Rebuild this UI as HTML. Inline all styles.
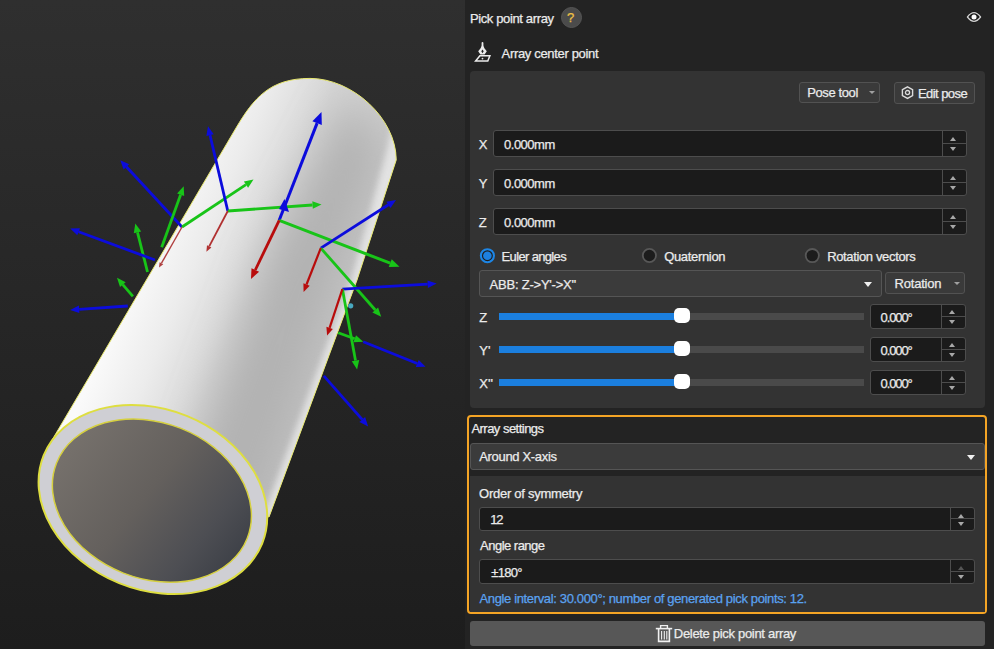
<!DOCTYPE html>
<html><head><meta charset="utf-8">
<style>
*{margin:0;padding:0;box-sizing:border-box}
html,body{width:994px;height:649px;overflow:hidden;background:#232323;font-family:"Liberation Sans",sans-serif;color:#ebebeb;font-size:13px}
.a{position:absolute}
#view{left:0;top:0;width:465px;height:649px}
.t{position:absolute;white-space:nowrap;line-height:1;-webkit-text-stroke:0.25px currentColor}
.card{background:#333333;border-radius:4px}
.inp{position:absolute;background:#1b1b1b;border:1px solid #4d4d4d;border-radius:3px}
.spin{position:absolute;right:0;top:0;bottom:0;width:24px;border-left:1px solid #4d4d4d}
.spin .mid{position:absolute;left:0;right:0;top:calc(50% - 1px);height:1px;background:#4d4d4d}
.up,.dn{position:absolute;left:7.2px;width:0;height:0;border-left:3.5px solid transparent;border-right:3.5px solid transparent}
.up{border-bottom:4px solid #a8a8a8}
.dn{border-top:4px solid #a8a8a8}
.btn{position:absolute;background:#3a3a3a;border:1px solid #525252;border-radius:3px}
.radio{position:absolute;width:15px;height:15px;border-radius:50%}
.track{position:absolute;height:7px;background:#4a4a4a}
.fill{position:absolute;height:7px;background:#1b7fdf}
.knob{position:absolute;width:16px;height:15px;border-radius:5px;background:#fff}
</style></head>
<body>
<svg id="view" class="a" width="465" height="649" viewBox="0 0 465 649">
  <defs>
    <linearGradient id="bg" x1="0" y1="0" x2="0" y2="1">
      <stop offset="0" stop-color="#2f2f2f"/>
      <stop offset="1" stop-color="#1d1d1d"/>
    </linearGradient>
    <linearGradient id="body" gradientUnits="userSpaceOnUse" x1="140" y1="260" x2="330" y2="340">
      <stop offset="0" stop-color="#fafafa"/>
      <stop offset="0.25" stop-color="#ececec"/>
      <stop offset="0.55" stop-color="#d4d4d4"/>
      <stop offset="1" stop-color="#c6c6c6"/>
    </linearGradient>
    <linearGradient id="hole" gradientUnits="userSpaceOnUse" x1="60" y1="470" x2="250" y2="530">
      <stop offset="0" stop-color="#75706b"/>
      <stop offset="0.45" stop-color="#64605d"/>
      <stop offset="0.8" stop-color="#4d4e53"/>
      <stop offset="1" stop-color="#3e4148"/>
    </linearGradient>
    <clipPath id="bc"><path d="M51.5,441 L236,128 C253.9,97.9 270,78.4 310,78.4 C352,78.4 396.2,118 396.2,160 L357,280 L269,517 Z"/></clipPath>
    <filter id="bl" x="-50%" y="-50%" width="200%" height="200%"><feGaussianBlur stdDeviation="20"/></filter>
    <filter id="bl2" x="-50%" y="-50%" width="200%" height="200%"><feGaussianBlur stdDeviation="3"/></filter>
  </defs>
  <rect width="465" height="649" fill="url(#bg)"/>
  <path d="M51.5,441 L236,128 C253.9,97.9 270,78.4 310,78.4 C352,78.4 396.2,118 396.2,160 L357,280 L269,517 Z" fill="url(#body)"/>
  <g clip-path="url(#bc)">
    <path d="M350,95 L385,150 L345,270 L265,520 L170,520 L270,250 Z" fill="#b2b2b2" filter="url(#bl)"/>
    <path d="M394,118 L402,160 L362,280 L274,517 L263,517 L352,278 L387,150 Z" fill="#e8e8e8" opacity="0.85" filter="url(#bl2)"/>
  </g>
  <path d="M51.5,441 L236,128 C253.9,97.9 270,78.4 310,78.4 C352,78.4 396.2,118 396.2,160 L357,280 L269,517 Z" fill="none" stroke="#e8e870" stroke-width="1"/>
  <ellipse cx="152.9" cy="499.5" rx="117.8" ry="90.2" transform="rotate(22 152.9 499.5)" fill="#cfcfd4" stroke="#dede40" stroke-width="2"/>
  <ellipse cx="151.9" cy="500.6" rx="102.5" ry="77.9" transform="rotate(21.5 151.9 500.6)" fill="url(#hole)" stroke="#d6d040" stroke-width="1.5"/>
  <g stroke-linecap="butt">
<line x1="182.0" y1="227.0" x2="126.4" y2="166.8" stroke="#0c0cdc" stroke-width="2.8"/>
<path d="M120.3,160.2 L129.2,164.2 L123.6,169.4 Z" fill="#0c0cdc"/>
<line x1="182.0" y1="227.0" x2="246.0" y2="184.6" stroke="#18c418" stroke-width="2.8"/>
<path d="M253.5,179.6 L248.1,187.7 L243.9,181.4 Z" fill="#18c418"/>
<line x1="182.0" y1="227.0" x2="161.5" y2="263.2" stroke="#b04040" stroke-width="1.4"/>
<path d="M159.0,267.6 L159.6,262.2 L163.3,264.3 Z" fill="#b04040"/>
<line x1="227.8" y1="211.0" x2="210.0" y2="135.1" stroke="#0c0cdc" stroke-width="2.8"/>
<path d="M208.0,126.3 L213.7,134.2 L206.4,135.9 Z" fill="#0c0cdc"/>
<line x1="227.8" y1="211.0" x2="312.5" y2="205.0" stroke="#18c418" stroke-width="2.8"/>
<path d="M321.5,204.4 L312.8,208.8 L312.3,201.3 Z" fill="#18c418"/>
<line x1="227.8" y1="211.0" x2="209.2" y2="246.4" stroke="#b03030" stroke-width="1.8"/>
<path d="M206.4,251.7 L207.0,245.2 L211.4,247.6 Z" fill="#b03030"/>
<line x1="279.2" y1="220.3" x2="317.1" y2="123.1" stroke="#0c0cdc" stroke-width="3"/>
<path d="M321.5,111.9 L321.8,124.9 L312.4,121.2 Z" fill="#0c0cdc"/>
<line x1="279.2" y1="220.3" x2="390.2" y2="263.2" stroke="#18c418" stroke-width="3"/>
<path d="M399.5,266.8 L388.7,267.1 L391.7,259.3 Z" fill="#18c418"/>
<line x1="279.2" y1="220.3" x2="255.3" y2="270.0" stroke="#b80c0c" stroke-width="2.8"/>
<path d="M251.0,279.0 L251.5,268.2 L259.1,271.8 Z" fill="#b80c0c"/>
<line x1="320.8" y1="248.1" x2="388.4" y2="204.8" stroke="#0c0cdc" stroke-width="2.8"/>
<path d="M396.0,200.0 L390.5,208.0 L386.4,201.7 Z" fill="#0c0cdc"/>
<line x1="320.8" y1="248.1" x2="375.3" y2="310.0" stroke="#18c418" stroke-width="2.8"/>
<path d="M381.2,316.8 L372.4,312.5 L378.1,307.5 Z" fill="#18c418"/>
<line x1="320.8" y1="248.1" x2="306.5" y2="284.5" stroke="#b80c0c" stroke-width="2.2"/>
<path d="M303.6,291.9 L303.4,283.2 L309.7,285.7 Z" fill="#b80c0c"/>
<line x1="342.4" y1="289.1" x2="427.7" y2="284.1" stroke="#0c0cdc" stroke-width="2.8"/>
<path d="M436.7,283.6 L427.9,287.9 L427.5,280.4 Z" fill="#0c0cdc"/>
<line x1="342.4" y1="289.1" x2="355.5" y2="360.6" stroke="#18c418" stroke-width="2.8"/>
<path d="M357.1,369.5 L351.8,361.3 L359.2,360.0 Z" fill="#18c418"/>
<line x1="342.4" y1="289.1" x2="329.6" y2="327.8" stroke="#b80c0c" stroke-width="2.2"/>
<path d="M327.1,335.4 L326.4,326.7 L332.8,328.9 Z" fill="#b80c0c"/>
<line x1="161.7" y1="247.3" x2="180.6" y2="194.8" stroke="#18c418" stroke-width="2.8"/>
<path d="M183.7,186.3 L184.2,196.0 L177.1,193.5 Z" fill="#18c418"/>
<line x1="147.5" y1="272.0" x2="137.5" y2="232.3" stroke="#18c418" stroke-width="2.8"/>
<path d="M135.3,223.6 L141.2,231.4 L133.8,233.3 Z" fill="#18c418"/>
<line x1="132.9" y1="296.4" x2="122.8" y2="284.6" stroke="#18c418" stroke-width="2.8"/>
<path d="M117.0,277.8 L125.7,282.2 L120.0,287.1 Z" fill="#18c418"/>
<line x1="155.0" y1="260.0" x2="78.6" y2="231.7" stroke="#0c0cdc" stroke-width="2.8"/>
<path d="M70.2,228.6 L80.0,228.2 L77.3,235.3 Z" fill="#0c0cdc"/>
<line x1="127.8" y1="306.0" x2="79.2" y2="309.4" stroke="#0c0cdc" stroke-width="2.8"/>
<path d="M70.2,310.0 L78.9,305.6 L79.4,313.1 Z" fill="#0c0cdc"/>
<line x1="338.2" y1="332.7" x2="354.7" y2="338.7" stroke="#18c418" stroke-width="2.8"/>
<path d="M363.2,341.8 L353.4,342.3 L356.0,335.2 Z" fill="#18c418"/>
<line x1="363.2" y1="341.8" x2="417.2" y2="363.5" stroke="#0c0cdc" stroke-width="2.8"/>
<path d="M425.6,366.8 L415.8,367.0 L418.7,359.9 Z" fill="#0c0cdc"/>
<line x1="323.8" y1="375.9" x2="362.3" y2="419.6" stroke="#0c0cdc" stroke-width="2.8"/>
<path d="M368.2,426.4 L359.4,422.1 L365.1,417.1 Z" fill="#0c0cdc"/>
<path d="M284.5,199 L289,212 L279,209 Z" fill="#0c0cdc"/>
<circle cx="350.7" cy="305.8" r="2.6" fill="#48a8c0"/>
  </g>
</svg>
<div class="a" style="left:465px;top:0;width:529px;height:649px;background:#232323"></div>
<div class="t" id="t1" style="left:469.90px;top:11.90px;letter-spacing:-0.366px;">Pick point array</div>
<div class="a" style="left:561px;top:7px;width:21px;height:21px;border-radius:50%;background:#4b4b4b;border:1px solid #555"></div>
<div class="t" id="q" style="left:567.00px;top:11.00px;letter-spacing:0.000px;color:#f0c244;font-size:13px">?</div>
<svg class="a" style="left:966px;top:11px;overflow:visible" width="16" height="12" viewBox="0 0 16 12">
  <path d="M1.4,6 Q8,-2.6 14.6,6 Q8,14.6 1.4,6 Z" fill="none" stroke="#151515" stroke-width="2.6"/><path d="M1.4,6 Q8,-2.6 14.6,6 Q8,14.6 1.4,6 Z" fill="none" stroke="#d0d0d0" stroke-width="1.3"/>
  <circle cx="8" cy="6" r="2.5" fill="#fff"/>
</svg>
<svg class="a" style="left:470px;top:38px" width="26" height="28" viewBox="0 0 26 28">
  <rect x="11.6" y="4" width="1.8" height="4.2" rx="0.9" fill="#ececec"/>
  <path d="M11.7,7.6 L13.3,7.6 L14.4,10.2 L16.8,13.2 L14.6,16.6 L10.4,16.6 L8.2,13.2 L10.6,10.2 Z M12.5,11.4 L11.3,13.3 L12.5,15.3 L13.7,13.3 Z" fill="#ececec" fill-rule="evenodd"/>
  <path d="M9.9,17.8 L19.9,17.8 L17.8,23.1 L5.6,23.1 Z" fill="none" stroke="#ececec" stroke-width="1.5"/>
  <circle cx="12.5" cy="20.6" r="0.9" fill="#ececec"/>
</svg>
<div class="t" id="t2" style="left:501.60px;top:47.10px;letter-spacing:-0.330px;">Array center point</div>
<div class="a card" style="left:470px;top:71px;width:515px;height:337px"></div>
<div class="btn" style="left:799px;top:82px;width:81px;height:21px"></div>
<div class="a" style="left:869px;top:91px;width:0;height:0;border-left:3px solid transparent;border-right:3px solid transparent;border-top:3px solid #a0a0a0"></div>
<div class="btn" style="left:894px;top:82px;width:81px;height:22px"></div>
<svg class="a" style="left:901px;top:86px" width="13" height="14" viewBox="0 0 13 14">
  <path d="M6.5,0.8 L11.6,3.7 L11.6,9.5 L6.5,12.4 L1.4,9.5 L1.4,3.7 Z" fill="none" stroke="#dcdcdc" stroke-width="1.4"/>
  <circle cx="6.5" cy="6.6" r="2.1" fill="none" stroke="#dcdcdc" stroke-width="1.3"/>
</svg>
<div class="t" id="t3" style="left:807.20px;top:85.71px;letter-spacing:-0.386px;">Pose tool</div>
<div class="t" id="t4" style="left:917.90px;top:86.71px;letter-spacing:-0.550px;">Edit pose</div>
<div class="t" id="l0" style="left:478.70px;top:137.90px;letter-spacing:-1.100px;">X</div>
<div class="inp" style="left:493px;top:130px;width:474px;height:27px"><div class="spin"><div class="mid"></div><div class="up" style="top:6px"></div><div class="dn" style="top:16px"></div></div></div>
<div class="t" id="v0" style="left:504.00px;top:137.90px;letter-spacing:-0.483px;">0.000mm</div>
<div class="t" id="l1" style="left:478.70px;top:176.90px;letter-spacing:-1.100px;">Y</div>
<div class="inp" style="left:493px;top:169px;width:474px;height:27px"><div class="spin"><div class="mid"></div><div class="up" style="top:6px"></div><div class="dn" style="top:16px"></div></div></div>
<div class="t" id="v1" style="left:504.00px;top:176.90px;letter-spacing:-0.483px;">0.000mm</div>
<div class="t" id="l2" style="left:478.70px;top:215.90px;letter-spacing:-1.100px;">Z</div>
<div class="inp" style="left:493px;top:208px;width:474px;height:27px"><div class="spin"><div class="mid"></div><div class="up" style="top:6px"></div><div class="dn" style="top:16px"></div></div></div>
<div class="t" id="v2" style="left:504.00px;top:215.90px;letter-spacing:-0.483px;">0.000mm</div>
<svg class="a" style="left:479px;top:247px" width="17" height="17" viewBox="0 0 17 17"><circle cx="8.4" cy="8.7" r="6.5" fill="#1e1e1e" stroke="#1d86e6" stroke-width="2.1"/><circle cx="8.4" cy="8.7" r="4.3" fill="#1d80e0"/></svg>
<svg class="a" style="left:641px;top:247px" width="17" height="17" viewBox="0 0 17 17"><circle cx="8.4" cy="8.5" r="6.6" fill="#1c1c1c" stroke="#585858" stroke-width="1.8"/></svg>
<svg class="a" style="left:804px;top:247px" width="17" height="17" viewBox="0 0 17 17"><circle cx="8.3" cy="8.6" r="6.6" fill="#1c1c1c" stroke="#585858" stroke-width="1.8"/></svg>
<div class="btn" style="left:479px;top:270px;width:403px;height:27px;background:#3b3b3b;border-color:#555"></div>
<div class="a" style="left:864px;top:282px;width:0;height:0;border-left:4.5px solid transparent;border-right:4.5px solid transparent;border-top:5px solid #f0f0f0"></div>
<div class="btn" style="left:885px;top:272px;width:80px;height:22px"></div>
<div class="a" style="left:954px;top:282px;width:0;height:0;border-left:3px solid transparent;border-right:3px solid transparent;border-top:3px solid #a0a0a0"></div>
<div class="t" id="t7" style="left:501.60px;top:250.21px;letter-spacing:-0.654px;">Euler angles</div>
<div class="t" id="t8" style="left:664.20px;top:250.21px;letter-spacing:-0.333px;">Quaternion</div>
<div class="t" id="t9" style="left:827.20px;top:250.21px;letter-spacing:-0.360px;">Rotation vectors</div>
<div class="t" id="t10" style="left:489.60px;top:278.00px;letter-spacing:-0.222px;">ABB: Z-&gt;Y'-&gt;X''</div>
<div class="t" id="t11" style="left:894.60px;top:276.80px;letter-spacing:-0.229px;">Rotation</div>
<div class="t" id="sl0" style="left:479.30px;top:311.00px;letter-spacing:0.000px;">Z</div>
<div class="track" style="left:499px;top:313px;width:365px"></div>
<div class="fill" style="left:499px;top:313px;width:179px"></div>
<div class="knob" style="left:674px;top:308px"></div>
<div class="inp" style="left:870px;top:304px;width:96px;height:25px"><div class="spin"><div class="mid"></div><div class="up" style="top:5px"></div><div class="dn" style="top:14.5px"></div></div></div>
<div class="t" id="sv0" style="left:880.60px;top:311.00px;letter-spacing:-1.120px;">0.000°</div>
<div class="t" id="sl1" style="left:479.30px;top:344.00px;letter-spacing:0.000px;">Y'</div>
<div class="track" style="left:499px;top:346px;width:365px"></div>
<div class="fill" style="left:499px;top:346px;width:179px"></div>
<div class="knob" style="left:674px;top:341px"></div>
<div class="inp" style="left:870px;top:337px;width:96px;height:25px"><div class="spin"><div class="mid"></div><div class="up" style="top:5px"></div><div class="dn" style="top:14.5px"></div></div></div>
<div class="t" id="sv1" style="left:880.60px;top:344.00px;letter-spacing:-1.120px;">0.000°</div>
<div class="t" id="sl2" style="left:479.30px;top:377.00px;letter-spacing:0.000px;">X''</div>
<div class="track" style="left:499px;top:379px;width:365px"></div>
<div class="fill" style="left:499px;top:379px;width:179px"></div>
<div class="knob" style="left:674px;top:374px"></div>
<div class="inp" style="left:870px;top:370px;width:96px;height:25px"><div class="spin"><div class="mid"></div><div class="up" style="top:5px"></div><div class="dn" style="top:14.5px"></div></div></div>
<div class="t" id="sv2" style="left:880.60px;top:377.00px;letter-spacing:-1.120px;">0.000°</div>
<div class="a" style="left:467px;top:415px;width:520px;height:199px;border:2px solid #f4a425;border-radius:4px;background:#232323"></div>
<div class="btn" style="left:470px;top:443px;width:515px;height:27px;background:#3b3b3b;border-color:#555"></div>
<div class="a" style="left:967px;top:455px;width:0;height:0;border-left:4.5px solid transparent;border-right:4.5px solid transparent;border-top:5px solid #f0f0f0"></div>
<div class="a" style="left:470px;top:476px;width:515px;height:136px;background:#333"></div>
<div class="inp" style="left:479px;top:507px;width:496px;height:24px"><div class="spin"><div class="mid"></div><div class="up" style="top:6px"></div><div class="dn" style="top:14px"></div></div></div>
<div class="inp" style="left:479px;top:559px;width:496px;height:25px"><div class="spin"><div class="mid"></div><div class="up" style="top:6px;border-bottom-color:#555"></div><div class="dn" style="top:15px"></div></div></div>
<div class="a" style="left:470px;top:621px;width:515px;height:25px;background:#575757;border-radius:3px"></div>
<svg class="a" style="left:655px;top:624px" width="18" height="19" viewBox="0 0 18 19">
  <g fill="none" stroke="#f0f0f0">
    <path d="M5.6,4.2 L5.6,1.6 L12.4,1.6 L12.4,4.2" stroke-width="1.4"/>
    <line x1="0.8" y1="4.6" x2="17.2" y2="4.6" stroke-width="1.6"/>
    <path d="M3.6,5 L3.6,17.4 L14.4,17.4 L14.4,5" stroke-width="1.6"/>
    <line x1="6.6" y1="7" x2="6.6" y2="15.6" stroke-width="1.1"/>
    <line x1="9.3" y1="7" x2="9.3" y2="15.6" stroke-width="1.1"/>
    <line x1="11.8" y1="7" x2="11.8" y2="15.6" stroke-width="1.1"/>
  </g>
</svg>
<div class="t" id="t13" style="left:471.40px;top:422.40px;letter-spacing:-0.523px;">Array settings</div>
<div class="t" id="t14" style="left:479.20px;top:449.71px;letter-spacing:-0.317px;">Around X-axis</div>
<div class="t" id="t15" style="left:479.10px;top:486.80px;letter-spacing:-0.269px;">Order of symmetry</div>
<div class="t" id="t16" style="left:490.30px;top:513.40px;letter-spacing:-1.300px;">12</div>
<div class="t" id="t17" style="left:480.10px;top:538.80px;letter-spacing:-0.520px;">Angle range</div>
<div class="t" id="t18" style="left:491.30px;top:566.00px;letter-spacing:-0.700px;">±180°</div>
<div class="t" id="t19" style="left:479.50px;top:591.60px;letter-spacing:-0.358px;color:#5aa2f0">Angle interval: 30.000°; number of generated pick points: 12.</div>
<div class="t" id="t20" style="left:673.80px;top:627.40px;letter-spacing:-0.309px;">Delete pick point array</div>
</body></html>
